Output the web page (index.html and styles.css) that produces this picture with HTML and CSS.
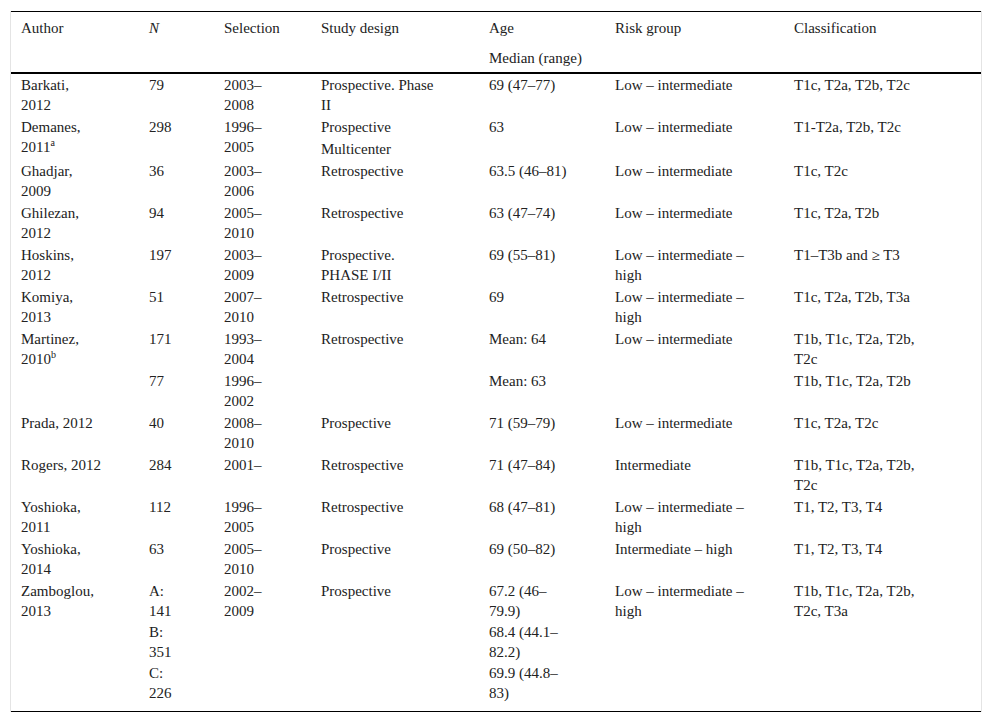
FILE: index.html
```html
<!DOCTYPE html>
<html lang="en">
<head>
<meta charset="utf-8">
<title>Studies table</title>
<link rel="stylesheet" href="styles.css">
</head>
<body>
<div class="wrap">
<table class="tbl">
<colgroup>
<col class="c-author"><col class="c-n"><col class="c-sel"><col class="c-design"><col class="c-age"><col class="c-risk"><col class="c-class">
</colgroup>
<thead>
<tr>
<th>Author</th>
<th><i>N</i></th>
<th>Selection</th>
<th>Study design</th>
<th>Age<span class="sub">Median (range)</span></th>
<th>Risk group</th>
<th>Classification</th>
</tr>
</thead>
<tbody>
<tr><td>Barkati,<br>2012</td><td>79</td><td>2003–<br>2008</td><td>Prospective. Phase<br>II</td><td>69 (47–77)</td><td>Low – intermediate</td><td>T1c, T2a, T2b, T2c</td></tr>
<tr><td>Demanes,<br>2011<sup>a</sup></td><td>298</td><td>1996–<br>2005</td><td>Prospective<span class="next">Multicenter</span></td><td>63</td><td>Low – intermediate</td><td>T1-T2a, T2b, T2c</td></tr>
<tr><td>Ghadjar,<br>2009</td><td>36</td><td>2003–<br>2006</td><td>Retrospective</td><td>63.5 (46–81)</td><td>Low – intermediate</td><td>T1c, T2c</td></tr>
<tr><td>Ghilezan,<br>2012</td><td>94</td><td>2005–<br>2010</td><td>Retrospective</td><td>63 (47–74)</td><td>Low – intermediate</td><td>T1c, T2a, T2b</td></tr>
<tr><td>Hoskins,<br>2012</td><td>197</td><td>2003–<br>2009</td><td>Prospective.<br>PHASE I/II</td><td>69 (55–81)</td><td>Low – intermediate –<br>high</td><td>T1–T3b and ≥ T3</td></tr>
<tr><td>Komiya,<br>2013</td><td>51</td><td>2007–<br>2010</td><td>Retrospective</td><td>69</td><td>Low – intermediate –<br>high</td><td>T1c, T2a, T2b, T3a</td></tr>
<tr><td>Martinez,<br>2010<sup>b</sup></td><td>171</td><td>1993–<br>2004</td><td>Retrospective</td><td>Mean: 64</td><td>Low – intermediate</td><td>T1b, T1c, T2a, T2b,<br>T2c</td></tr>
<tr><td></td><td>77</td><td>1996–<br>2002</td><td></td><td>Mean: 63</td><td></td><td>T1b, T1c, T2a, T2b</td></tr>
<tr><td>Prada, 2012</td><td>40</td><td>2008–<br>2010</td><td>Prospective</td><td>71 (59–79)</td><td>Low – intermediate</td><td>T1c, T2a, T2c</td></tr>
<tr><td>Rogers, 2012</td><td>284</td><td>2001–</td><td>Retrospective</td><td>71 (47–84)</td><td>Intermediate</td><td>T1b, T1c, T2a, T2b,<br>T2c</td></tr>
<tr><td>Yoshioka,<br>2011</td><td>112</td><td>1996–<br>2005</td><td>Retrospective</td><td>68 (47–81)</td><td>Low – intermediate –<br>high</td><td>T1, T2, T3, T4</td></tr>
<tr><td>Yoshioka,<br>2014</td><td>63</td><td>2005–<br>2010</td><td>Prospective</td><td>69 (50–82)</td><td>Intermediate – high</td><td>T1, T2, T3, T4</td></tr>
<tr class="last"><td>Zamboglou,<br>2013</td><td><span class="blk">A:<br>141</span><span class="blk">B:<br>351</span><span class="blk">C:<br>226</span></td><td>2002–<br>2009</td><td>Prospective</td><td><span class="blk">67.2 (46–<br>79.9)</span><span class="blk">68.4 (44.1–<br>82.2)</span><span class="blk">69.9 (44.8–<br>83)</span></td><td>Low – intermediate –<br>high</td><td>T1b, T1c, T2a, T2b,<br>T2c, T3a</td></tr>
</tbody>
</table>
</div>
</body>
</html>
```

FILE: styles.css
```css
html, body {
  margin: 0;
  padding: 0;
  background: #ffffff;
}

body {
  font-family: "Liberation Serif", "Times New Roman", Times, "Nimbus Roman", "DejaVu Serif", serif;
  font-size: 15px;
  line-height: 20px;
  color: #222222;
}

.wrap {
  margin: 11px 0 0 10px;
  width: 970px;
  border-left: 1px solid #e4e4e4;
  border-right: 1px solid #e4e4e4;
}

.tbl {
  width: 970px;
  table-layout: fixed;
  border-collapse: separate;
  border-spacing: 0;
  border-top: 1px solid #000000;
  border-bottom: 1px solid #000000;
  font-family: "Liberation Serif", "Times New Roman", Times, "Nimbus Roman", "DejaVu Serif", serif;
}

.c-author { width: 128px; }
.c-n { width: 75px; }
.c-sel { width: 97px; }
.c-design { width: 168px; }
.c-age { width: 126px; }
.c-risk { width: 179px; }
.c-class { width: 197px; }

.tbl th {
  font-weight: normal;
  text-align: left;
  vertical-align: top;
  padding: 6px 10px 4px 10px;
  border-bottom: 2px solid #000000;
}

.tbl th .sub {
  display: block;
  margin-top: 10px;
}

.tbl td {
  vertical-align: top;
  text-align: left;
  padding: 1px 10px;
}

.tbl tr.last td {
  padding-bottom: 8px;
}

.tbl .next {
  display: block;
  margin-top: 2px;
}

.tbl .blk {
  display: block;
}

.tbl .blk + .blk {
  margin-top: 1px;
}

sup {
  font-size: 10px;
  line-height: 0;
  vertical-align: 6px;
}
```
